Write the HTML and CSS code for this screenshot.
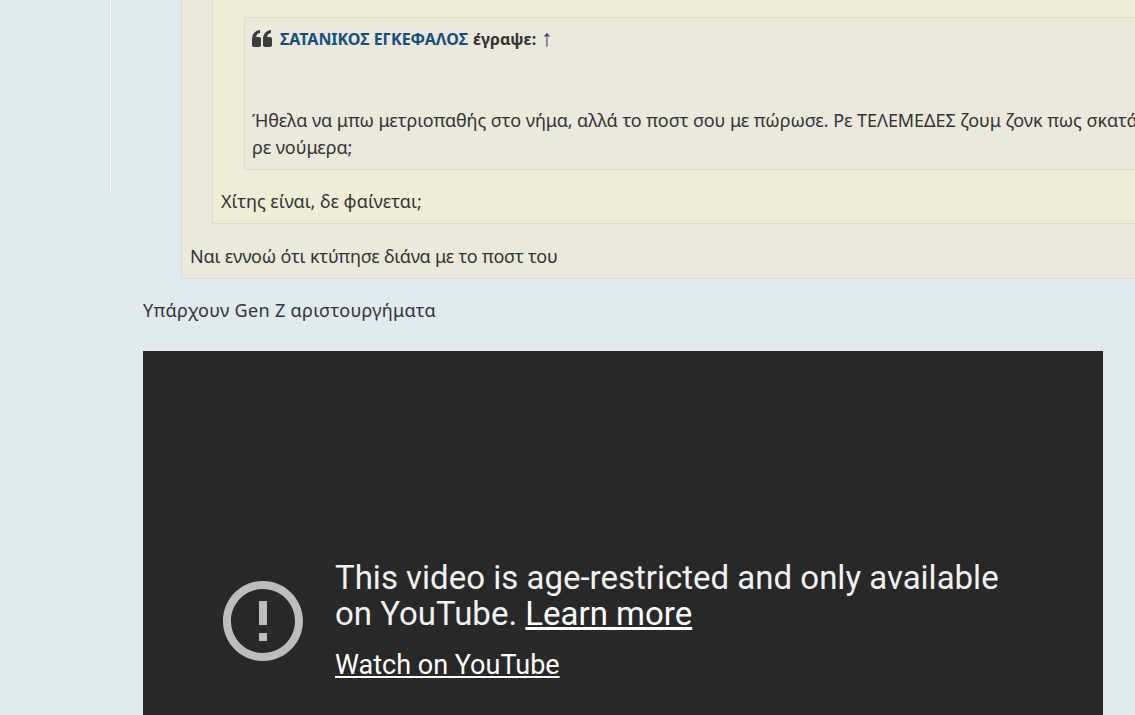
FILE: index.html
```html
<!DOCTYPE html>
<html lang="el">
<head>
<meta charset="utf-8">
<title>Post</title>
<link rel="stylesheet" href="styles.css">
</head>
<body>
<div class="page">
  <aside class="side"></aside>
  <main class="post">
    <blockquote class="quote outer">
      <blockquote class="quote middle">
        <blockquote class="quote inner">
          <div class="quote-head">
            <svg class="quote-icon" viewBox="0 0 20 17" aria-hidden="true"><path d="M0 9.500C0 4 3 .6 8 0v3C5.500 3.500 4.300 5 4.200 7H7c1.300 0 2 .8 2 2v6c0 1.200-.7 2-2 2H2c-1.300 0-2-.8-2-2zM11 9.500C11 4 14 .6 19 0v3c-2.500.5-3.700 2-3.800 4H18c1.300 0 2 .8 2 2v6c0 1.200-.7 2-2 2h-5c-1.300 0-2-.8-2-2z"/></svg>
            <a class="author">ΣΑΤΑΝΙΚΟΣ ΕΓΚΕΦΑΛΟΣ</a> <span>έγραψε:</span> <a class="up">↑</a>
          </div>
          <p class="inner-text">Ήθελα να μπω μετριοπαθής στο νήμα, αλλά το ποστ σου με πώρωσε. Ρε ΤΕΛΕΜΕΔΕΣ ζουμ ζονκ πως σκατά<br>ρε νούμερα;</p>
        </blockquote>
        <p class="middle-text">Χίτης είναι, δε φαίνεται;</p>
      </blockquote>
      <p class="outer-text">Ναι εννοώ ότι κτύπησε διάνα με το ποστ του</p>
    </blockquote>
    <p class="lead">Υπάρχουν Gen Z αριστουργήματα</p>
    <section class="video">
      <div class="video-msg">
        <svg class="alert" viewBox="0 0 24 24" aria-hidden="true"><path d="M11 15h2v2h-2zm0-8h2v6h-2zm.99-5C6.470 2 2 6.480 2 12s4.470 10 9.990 10C17.520 22 22 17.520 22 12S17.520 2 11.990 2zM12 20c-4.420 0-8-3.580-8-8s3.580-8 8-8 8 3.580 8 8-3.580 8-8 8z"/></svg>
        <div class="video-text">
          <div class="video-title">This video is age-restricted and only available<br>on YouTube. <a>Learn more</a></div>
          <a class="watch">Watch on YouTube</a>
        </div>
      </div>
    </section>
  </main>
</div>
</body>
</html>
```

FILE: styles.css
```css
html, body { margin: 0; padding: 0; height: 715px; overflow: hidden; }
body {
  background: #dfeaf1;
  color: #333;
  font-family: "Noto Sans", "DejaVu Sans", sans-serif;
  font-size: 18px;
}
.page { display: flex; align-items: flex-start; width: 1135px; height: 715px; overflow: hidden; }
.side { flex: 0 0 110px; height: 192px; border-right: 1px solid #fff; }
.post { flex: 0 0 1400px; padding-left: 32px; box-sizing: border-box; }
.quote { margin: 0; box-sizing: border-box; border: 1px solid #dfdcc8; }
.outer { margin-left: 38px; background: #ebe9db; border-top: 0; padding: 0 0 8px 8px; }
.middle { margin-left: 22px; background: #efedd6; border-top: 0; padding: 17px 0 8px 8px; }
.inner { margin-left: 23px; background: #ebe9db; padding: 7px 0 7px 7px; height: 153px; }
.quote-head { display: flex; align-items: center; gap: 5px; height: 27px; font-weight: 700; font-size: 16px; white-space: pre; }
.quote-icon { width: 20px; height: 17px; fill: #3c3c3c; margin-right: 3px; }
.author { color: #14507f; }
.up { color: #551a8b; font-weight: 400; font-size: 23px; line-height: 27px; font-family: "Liberation Sans", sans-serif; }
.inner-text { margin: 55px 0 0; line-height: 27px; white-space: nowrap; letter-spacing: -0.05px; }
.middle-text { margin: 18px 0 0; line-height: 27px; }
.outer-text { margin: 19px 0 0; line-height: 27px; letter-spacing: -0.19px; }
.lead { margin: 18px 0 0; line-height: 27px; letter-spacing: 0.31px; }
.video { margin-top: 27px; width: 960px; height: 540px; background: #282828; color: #f1f1f1; font-family: Roboto, sans-serif; box-sizing: border-box; padding: 209px 72px 0; }
.video-msg { display: flex; align-items: center; gap: 24px; }
.alert { flex: none; width: 96px; height: 96px; fill: #bdbdbd; }
.video-title { font-size: 33px; line-height: 36px; }
.video-text a { text-decoration: underline; color: #fff; }
.watch { display: block; margin-top: 17px; font-size: 27px; line-height: 32px; }
```
